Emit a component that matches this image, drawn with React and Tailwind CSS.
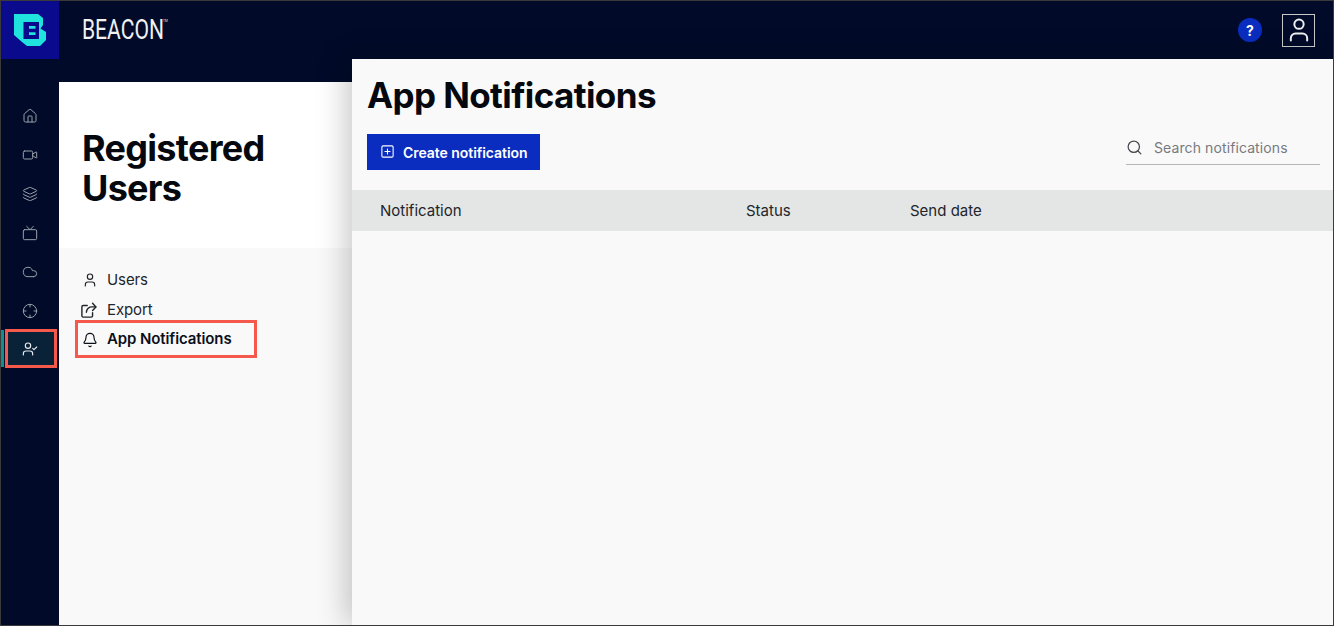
import React from "react";
import { Home, Video, Layers, Tv, Cloud, Crosshair, UserCheck, User, Bell, Search, SquarePlus } from "lucide-react";

const navIcons = [Home, Video, Layers, Tv, Cloud, Crosshair];

function Logo() {
  return (
    <svg width="33" height="32" viewBox="0 0 33 32">
      <path d="M0 0H24L29 4V11L26.5 14.5L32 18V26L26 32H13L8 28L0 21Z" fill="#1fe3dc" />
      <path d="M9.5 8H25V25H9.5Z" fill="#0a0a8c" />
      <path d="M15 12H21.5V14.8H15ZM15 18.2H21.5V21H15Z" fill="#1fe3dc" />
    </svg>
  );
}

function ExportIcon() {
  return (
    <svg width="16" height="16" viewBox="0 0 18 18" fill="none" stroke="currentColor" strokeWidth="1.6" strokeLinecap="round" strokeLinejoin="round">
      <path d="M7 4H2.5C1.7 4 1 4.7 1 5.500V15.500C1 16.300 1.700 17 2.500 17H11.500C12.300 17 13 16.300 13 15.500V12" />
      <path d="M6 11.500C6.500 8 9 5.500 12.500 5.500H16.500" />
      <path d="M13 1.500L16.800 5.500L13 9.500" />
    </svg>
  );
}

export default function App() {
  return (
    <div className="w-[1334px] h-[626px] flex flex-col overflow-hidden bg-[#010b29] border border-[#3a3a3a] font-['Inter',sans-serif] text-[#0b0f19]">
      <header className="h-[58px] shrink-0 flex items-center">
        <div className="w-[58px] h-[58px] bg-[#0a0a8c] flex items-center justify-center">
          <Logo />
        </div>
        <div className="ml-[23px] flex items-start text-[#f1f1f1]">
          <span className="text-[27px] leading-none font-['Roboto',sans-serif] font-normal inline-block scale-x-[0.78] origin-left w-[70px] whitespace-nowrap">BEACON</span>
          <span className="ml-[11px] mt-[3px] text-[3px] leading-none">TM</span>
        </div>
        <div className="ml-auto flex items-center mr-[18px] gap-[20px]">
          <div className="w-[24px] h-[24px] rounded-full bg-[#0a2dbf] text-white text-[14px] font-bold flex items-center justify-center">?</div>
          <div className="w-[33px] h-[33px] border border-[#c8c8c8] flex items-center justify-center">
            <User size={28} strokeWidth={1.7} className="text-[#eeeeee]" />
          </div>
        </div>
      </header>
      <div className="flex-1 flex min-h-0">
        <aside className="w-[58px] shrink-0 pt-[37px] flex flex-col">
          {navIcons.map((Icon, i) => (
            <div key={i} className="h-[39px] flex items-center justify-center">
              <Icon size={16} strokeWidth={1.5} className="text-[#9a9fa9]" />
            </div>
          ))}
          <div className="relative h-[39px] -mt-[1px] flex items-center justify-center pt-[1px]">
            <div className="absolute left-0 top-[1px] bottom-[1px] w-[3px] bg-[#0d8f8c]" />
            <div className="absolute left-[4px] right-[2px] top-0 bottom-0 bg-[#0a2238] border-[3px] border-[#f4594c]" />
            <UserCheck size={16} strokeWidth={1.75} className="relative text-[#e6e8ec]" />
          </div>
        </aside>
        <section className="w-[293px] shrink-0 mt-[23px] bg-[#f9f9f9] flex flex-col">
          <div className="h-[166px] bg-white pt-[46px] pl-[23px]">
            <h2 className="text-[36px] leading-[40px] font-bold tracking-[-0.7px] text-[#05080f]">Registered<br />Users</h2>
          </div>
          <ul className="pt-[17px] pl-[16px] text-[15px] tracking-[-0.1px]">
            <li className="h-[30px] flex items-center text-[#22252b] pl-[6px]">
              <User size={16} strokeWidth={1.75} className="mx-[1px]" />
              <span className="ml-[8px]">Users</span>
            </li>
            <li className="h-[30px] flex items-center text-[#22252b] pl-[6px]">
              <ExportIcon />
              <span className="ml-[10px]">Export</span>
            </li>
            <li className="h-[38px] w-[182px] -mt-[5px] pt-[1px] flex items-center font-semibold text-[#0b0f19] pl-[6px] border-[3px] border-[#f4594c]">
              <Bell size={16} strokeWidth={1.75} className="-ml-[2px] mr-[1px]" />
              <span className="ml-[8px]">App Notifications</span>
            </li>
          </ul>
        </section>
        <main className="relative flex-1 bg-[#f9f9f9] shadow-[-6px_0_28px_rgba(0,0,0,0.22)] flex flex-col">
          <h1 className="pl-[15px] pt-[14px] text-[35px] leading-[44px] font-bold tracking-[-0.6px] text-[#05080f]">App Notifications</h1>
          <div className="mt-[17px] pl-[15px] pr-[13px] flex items-start justify-between">
            <button className="h-[36px] w-[173px] bg-[#0a2dbf] text-white text-[14px] tracking-[-0.05px] font-semibold flex items-center pl-[13px] gap-[8px]">
              <SquarePlus size={15} strokeWidth={1.75} className="-mt-[1px]" />
              Create notification
            </button>
            <div className="w-[194px] h-[31px] border-b border-[#b5b5b5] flex items-center text-[#777a80] text-[14px] tracking-[0.1px] pb-[3px]">
              <Search size={17} strokeWidth={1.75} className="text-[#44474d]" />
              <span className="ml-[11px]">Search notifications</span>
            </div>
          </div>
          <div className="mt-[20px] h-[41px] bg-[#e4e5e5] flex items-center text-[15px] text-[#22252b] pt-[1px]">
            <span className="ml-[28px] w-[366px]">Notification</span>
            <span className="w-[164px]">Status</span>
            <span>Send date</span>
          </div>
        </main>
      </div>
    </div>
  );
}
